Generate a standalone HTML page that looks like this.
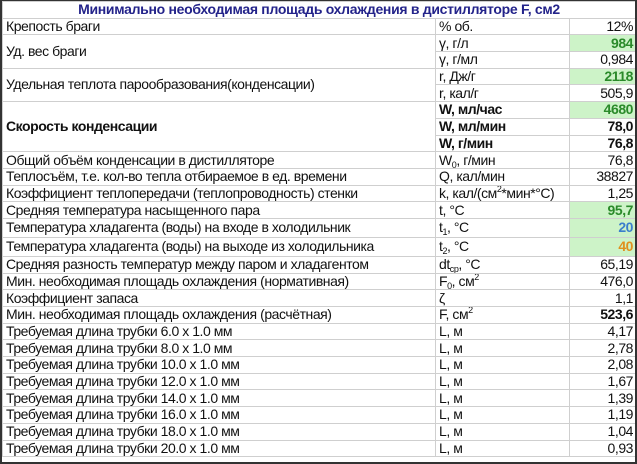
<!DOCTYPE html>
<html><head><meta charset="utf-8"><style>
html,body{margin:0;padding:0;background:#fff;}
body{width:637px;height:464px;overflow:hidden;font-family:"Liberation Sans",Arial,sans-serif;font-size:14px;letter-spacing:-0.45px;color:#111;}
.wrap{position:absolute;left:0;top:0;width:633px;height:461px;border:2px solid #333;border-top:1px solid #333;box-sizing:content-box;overflow:hidden;}
table{border-collapse:collapse;table-layout:fixed;width:633px;}
td{border:1px solid #cfcfcf;padding:0 3px;height:15.7px;line-height:15px;white-space:nowrap;overflow:hidden;}
td.v{text-align:right;padding-right:2px;}
.t{text-align:center;font-weight:bold;color:#23238a;letter-spacing:-0.3px;}
.b{font-weight:bold;}
.g{background:#cdf3c8;}
.gt{color:#2a8a2a;font-weight:bold;}
.bl{color:#3a7fcc;font-weight:bold;}
.or{color:#e0901e;font-weight:bold;}
tr.h19 td{height:18px;}
sub,sup{font-size:9px;line-height:0;vertical-align:baseline;position:relative;}
sub{top:3px;} sup{top:-6px;}
</style></head><body>
<div class="wrap">
<table>
<colgroup><col style="width:433px"><col style="width:134px"><col style="width:66px"></colgroup>
<tr><td class="t" colspan="3">Минимально необходимая площадь охлаждения в дистилляторе F, см2</td></tr>
<tr><td>Крепость браги</td><td>% об.</td><td class="v">12%</td></tr>
<tr><td rowspan="2">Уд. вес браги</td><td>γ, г/л</td><td class="v g gt">984</td></tr>
<tr><td>γ, г/мл</td><td class="v">0,984</td></tr>
<tr><td rowspan="2">Удельная теплота парообразования(конденсации)</td><td>r, Дж/г</td><td class="v g gt">2118</td></tr>
<tr><td>r, кал/г</td><td class="v">505,9</td></tr>
<tr><td rowspan="3" class="b">Скорость конденсации</td><td class="b">W, мл/час</td><td class="v g gt">4680</td></tr>
<tr><td class="b">W, мл/мин</td><td class="v b">78,0</td></tr>
<tr><td class="b">W, г/мин</td><td class="v b">76,8</td></tr>
<tr><td>Общий объём конденсации в дистилляторе</td><td>W<sub>0</sub>, г/мин</td><td class="v">76,8</td></tr>
<tr><td>Теплосъём, т.е. кол-во тепла отбираемое в ед. времени</td><td>Q, кал/мин</td><td class="v">38827</td></tr>
<tr><td>Коэффициент теплопередачи (теплопроводность) стенки</td><td>k, кал/(см<sup>2</sup>*мин*°С)</td><td class="v">1,25</td></tr>
<tr><td>Средняя температура насыщенного пара</td><td>t, °С</td><td class="v g gt">95,7</td></tr>
<tr class="h19"><td>Температура хладагента (воды) на входе в холодильник</td><td>t<sub>1</sub>, °С</td><td class="v g bl">20</td></tr>
<tr class="h19"><td>Температура хладагента (воды) на выходе из холодильника</td><td>t<sub>2</sub>, °С</td><td class="v g or">40</td></tr>
<tr><td>Средняя разность температур между паром и хладагентом</td><td>dt<sub>ср</sub>, °С</td><td class="v">65,19</td></tr>
<tr><td>Мин. необходимая площадь охлаждения (нормативная)</td><td>F<sub>0</sub>, см<sup>2</sup></td><td class="v">476,0</td></tr>
<tr><td>Коэффициент запаса</td><td>ζ</td><td class="v">1,1</td></tr>
<tr><td>Мин. необходимая площадь охлаждения (расчётная)</td><td>F, см<sup>2</sup></td><td class="v b">523,6</td></tr>
<tr><td>Требуемая длина трубки 6.0 x 1.0 мм</td><td>L, м</td><td class="v">4,17</td></tr>
<tr><td>Требуемая длина трубки 8.0 x 1.0 мм</td><td>L, м</td><td class="v">2,78</td></tr>
<tr><td>Требуемая длина трубки 10.0 x 1.0 мм</td><td>L, м</td><td class="v">2,08</td></tr>
<tr><td>Требуемая длина трубки 12.0 x 1.0 мм</td><td>L, м</td><td class="v">1,67</td></tr>
<tr><td>Требуемая длина трубки 14.0 x 1.0 мм</td><td>L, м</td><td class="v">1,39</td></tr>
<tr><td>Требуемая длина трубки 16.0 x 1.0 мм</td><td>L, м</td><td class="v">1,19</td></tr>
<tr><td>Требуемая длина трубки 18.0 x 1.0 мм</td><td>L, м</td><td class="v">1,04</td></tr>
<tr><td>Требуемая длина трубки 20.0 x 1.0 мм</td><td>L, м</td><td class="v">0,93</td></tr>
</table>
</div>
</body></html>
